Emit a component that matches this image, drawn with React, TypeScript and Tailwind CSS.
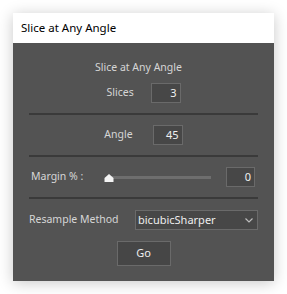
import React from 'react';

const font = { fontFamily: '"Segoe UI", "Noto Sans", "Open Sans", sans-serif' };

const Divider = () => <div className="mx-[16px] h-[2px] bg-[#3a3a3a]" />;

const NumBox = ({ value, className = '' }: { value: string; className?: string }) => (
  <div
    className={`h-[20px] border border-[#6a6a6a] bg-[#474747] text-right pr-[3px] text-[11px] leading-[17px] text-[#f0f0f0] ${className}`}
  >
    {value}
  </div>
);

export default function App() {
  return (
    <div className="w-[287px] h-[294px] bg-white" style={font}>
      <div className="absolute left-[13px] top-[13px] w-[261px] h-[268px] flex flex-col shadow-[0_2px_14px_rgba(0,0,0,0.22)]">
        {/* title bar */}
        <div className="h-[30px] bg-white flex items-center pl-[8px] text-[11.5px] text-black">Slice at Any Angle</div>

        {/* body */}
        <div className="flex-1 bg-[#535353] flex flex-col text-[10.5px] text-[#d6d6d6]">
          <div className="mt-[16px] h-[16px] leading-[16px] text-center pr-[10px]">Slice at Any Angle</div>

          <div className="mt-[8px] flex items-center justify-center gap-[19px]">
            <span className="w-[25px]">Slices</span>
            <NumBox value="3" className="w-[30px]" />
          </div>

          <div className="mt-[10px]"><Divider /></div>

          <div className="mt-[10px] flex items-center justify-center gap-[20px]">
            <span>Angle</span>
            <NumBox value="45" className="w-[30px]" />
          </div>

          <div className="mt-[10px]"><Divider /></div>

          <div className="mt-[10px] flex items-center pl-[18px] pr-[19px]">
            <span className="w-[73px]">Margin % :</span>
            <div className="relative w-[107px] h-[20px] flex items-center">
              <div className="absolute left-[4px] right-0 h-[3px] bg-[#6e6e6e]" />
              <svg className="absolute left-0 top-[7px]" width="10" height="8" viewBox="0 0 10 8">
                <path d="M5 0 L9.5 4 V8 H0.5 V4 Z" fill="#f4f4f4" />
              </svg>
            </div>
            <div className="flex-1" />
            <NumBox value="0" className="w-[29px] text-left pl-[3px]" />
          </div>

          <div className="mt-[10px]"><Divider /></div>

          <div className="mt-[11px] flex items-center pl-[16px] pr-[16px]">
            <span className="w-[106px]">Resample Method</span>
            <div className="flex-1 h-[20px] border border-[#6a6a6a] bg-[#474747] flex items-center pl-[2px] pr-[4px] text-[11px] text-[#eeeeee]">
              <span className="flex-1">bicubicSharper</span>
              <svg width="8" height="5" viewBox="0 0 8 5">
                <path d="M0.5 0.5 L4 4 L7.5 0.5" stroke="#bdbdbd" strokeWidth="1.2" fill="none" />
              </svg>
            </div>
          </div>

          <div className="mt-[11px] flex justify-center">
            <div className="w-[54px] h-[25px] border border-[#6a6a6a] bg-[#464646] flex items-center justify-center text-[11px] text-[#eeeeee]">
              Go
            </div>
          </div>
        </div>
      </div>
    </div>
  );
}
